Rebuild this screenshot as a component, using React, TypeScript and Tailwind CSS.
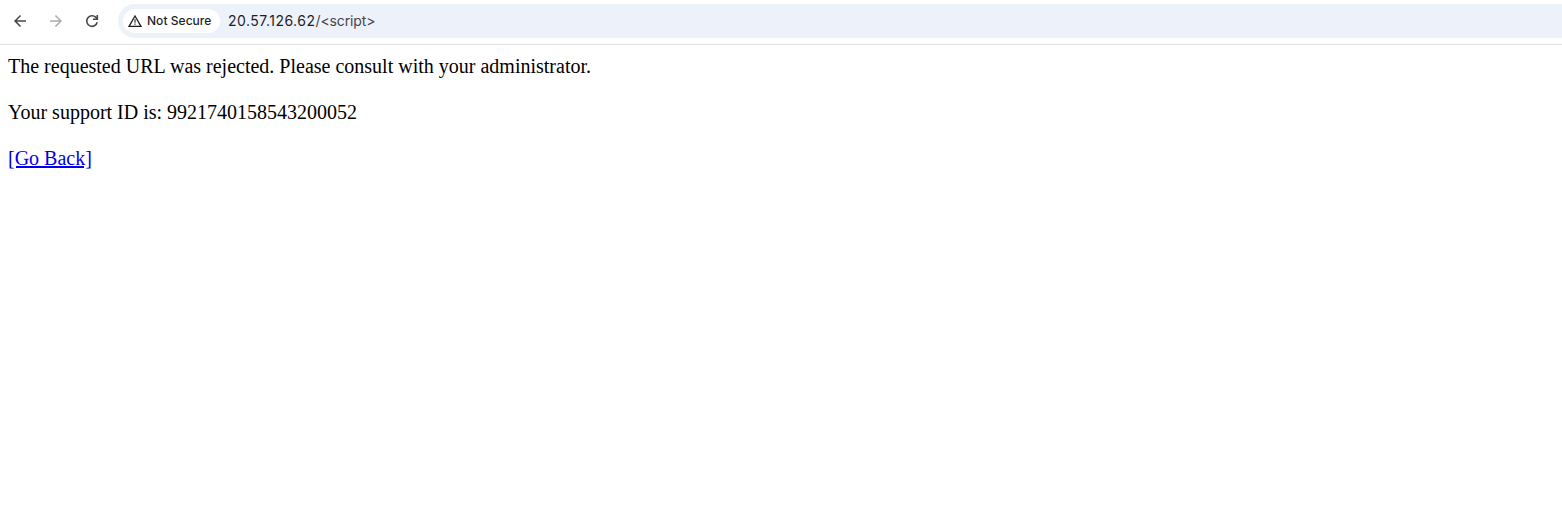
import React from "react";
import { MdArrowBack, MdArrowForward } from "react-icons/md";

function ReloadIcon() {
  return (
    <svg width="20" height="20" viewBox="0 0 20 20" fill="none" stroke="currentColor" strokeWidth="1.6" aria-hidden="true">
      <path d="M15.2 11.2A5.3 5.3 0 1 1 13.9 6.4L15.3 7.9" />
      <path d="M15.3 4V8.3H11" />
    </svg>
  );
}

function WarningIcon() {
  return (
    <svg width="16" height="16" viewBox="0 0 16 16" fill="none" stroke="currentColor" aria-hidden="true">
      <path d="M8 3L14 13.3H2Z" strokeWidth="1.3" />
      <path d="M8 6.2V9.7M8 10.5V11.8" strokeWidth="1.1" />
    </svg>
  );
}

export default function App() {
  return (
    <div className="h-[515px] w-full overflow-hidden bg-white">
      <header className="flex h-[45px] items-start border-b border-[#dfe1e5] pt-1">
        <nav className="flex h-[34px] w-[118px] shrink-0 items-center gap-[18px] pl-[11px]">
          <button aria-label="Back" className="text-[#474747]"><MdArrowBack size={18} /></button>
          <button aria-label="Forward" className="text-[#ababab]"><MdArrowForward size={18} /></button>
          <button aria-label="Reload" className="-ml-px text-[#474747]"><ReloadIcon /></button>
        </nav>
        <div className="flex h-[34px] flex-1 items-center rounded-l-full bg-[#edf1fa] pl-[5px]">
          <div className="flex h-6 w-[97px] items-center gap-1 rounded-full bg-white pl-1 font-['Inter',sans-serif] text-[12px] font-medium text-[#1f1f1f]">
            <WarningIcon />
            <span className="whitespace-nowrap tracking-[0.04px]">Not Secure</span>
          </div>
          <div className="ml-2 font-['Inter',sans-serif] text-[14px] leading-5 text-[#1f1f1f]">
            <span className="tracking-[0.48px]">20.57.126.62</span><span className="tracking-[-0.12px] text-[#474747]">/&lt;script&gt;</span>
          </div>
        </div>
      </header>
      <main className="px-2 pt-[10px] font-['Liberation_Serif',serif] text-[20px] leading-[23px] text-black">
        <p className="mb-[23px]">The requested URL was rejected. Please consult with your administrator.</p>
        <p className="mb-[23px]">Your support ID is: 9921740158543200052</p>
        <a href="#" className="text-[#0000ee] underline">[Go Back]</a>
      </main>
    </div>
  );
}
